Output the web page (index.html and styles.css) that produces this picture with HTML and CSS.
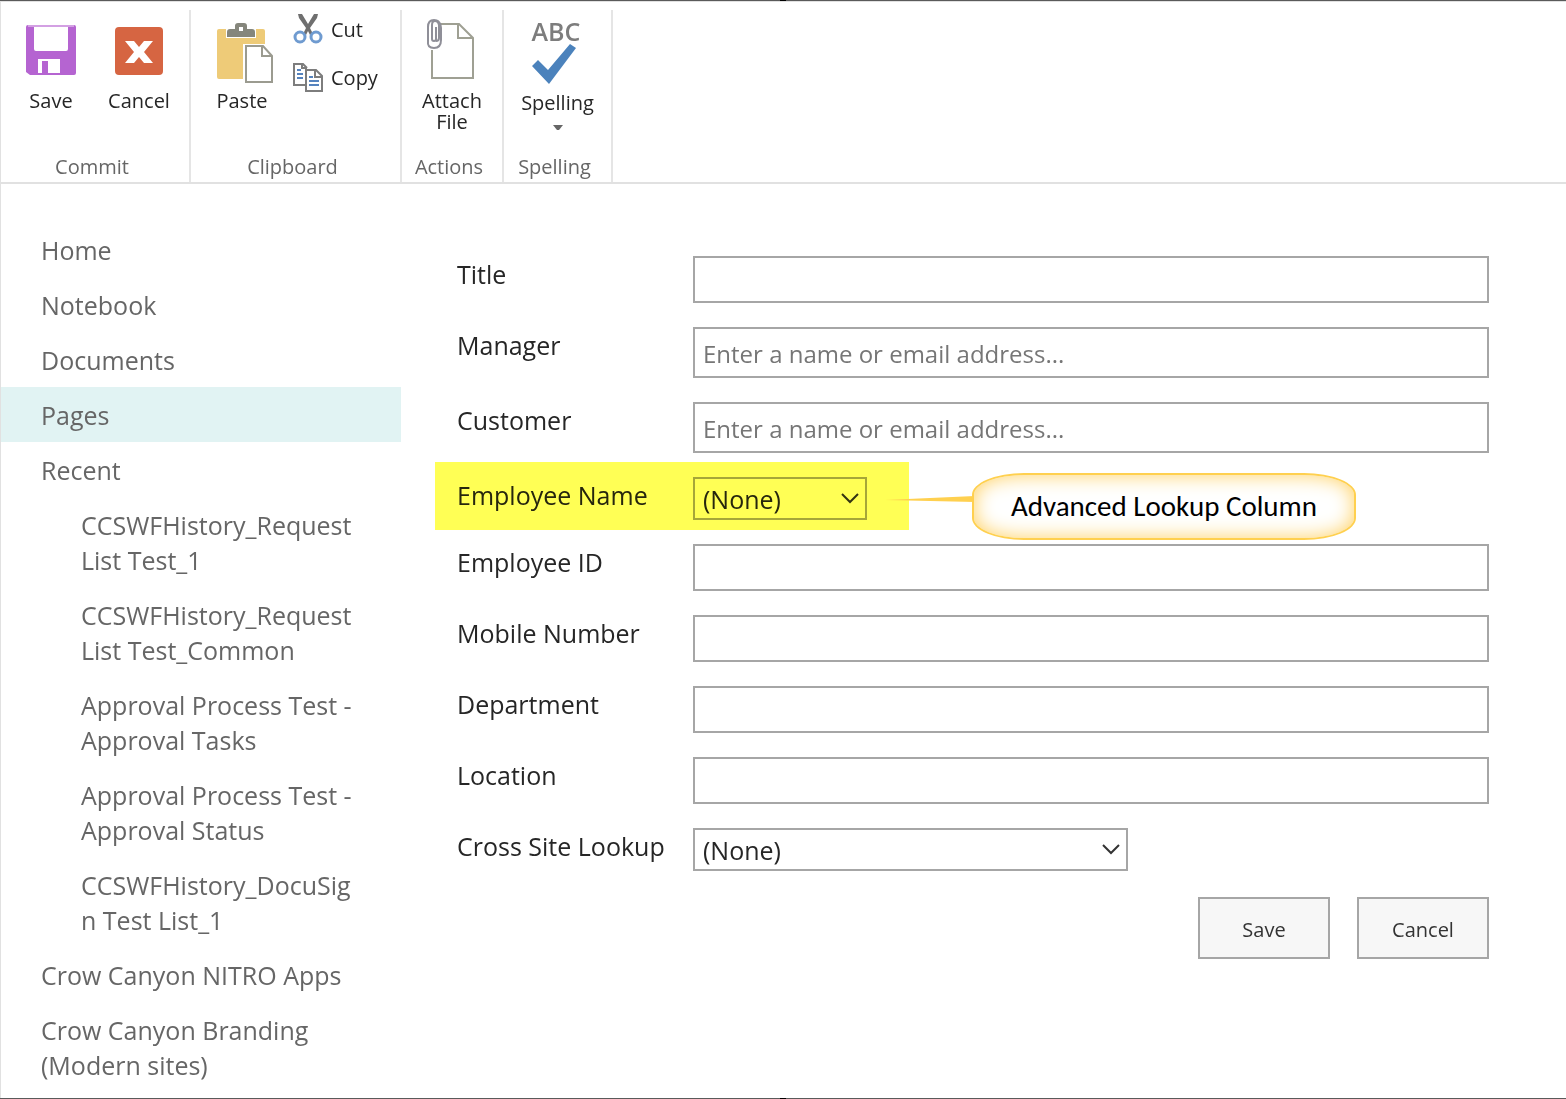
FILE: index.html
```html
<!DOCTYPE html>
<html lang="en">
<head>
<meta charset="utf-8">
<title>New Item</title>
<link rel="stylesheet" href="styles.css">
</head>
<body>
<div class="page">
  <header class="ribbon">
    <section class="group group-commit" aria-label="Commit">
      <div class="tools">
        <button type="button" class="tool">
          <svg class="tool-icon" width="52" height="52" viewBox="0 0 52 52">
            <path fill="#b564d1" fill-rule="evenodd" d="M1 3Q1 1 3 1H49Q51 1 51 3V49Q51 51 49 51H5L1 48ZM9 3V25Q9 27 11 27H41Q43 27 43 25V3ZM13 35V49H17V37H23V49H35V35Z"/>
            <path fill="#d3a0e3" d="M3 1H49V3H3Z"/>
          </svg>
          <span>Save</span>
        </button>
        <button type="button" class="tool">
          <svg class="tool-icon" width="52" height="52" viewBox="0 0 52 52">
            <rect x="2" y="3" width="48" height="48" rx="4" fill="#d66542"/>
            <path fill="#fff" d="M12 17H21L26 23L31 17H40L31 28L40 39H31L26 33L21 39H12L21 28Z"/>
          </svg>
          <span>Cancel</span>
        </button>
      </div>
      <h2 class="group-name">Commit</h2>
    </section>
    <section class="group group-clipboard" aria-label="Clipboard">
      <div class="tools">
        <button type="button" class="tool">
          <svg class="tool-icon icon-tall" width="58" height="62" viewBox="0 0 58 62">
            <path fill="#eecb78" d="M3 7H47Q49 7 49 9V22H27V57H3Q1 57 1 55V9Q1 7 3 7Z"/>
            <path fill="#fff" d="M10 6H40V16H10Z"/>
            <path fill="#85867c" fill-rule="evenodd" d="M11 15V10Q11 7 14 7H19V4Q19 1 22 1H28Q31 1 31 4V7H36Q39 7 39 10V15ZM23 5V9H27V5Z"/>
            <path fill="#fff" stroke="#9b9b90" stroke-width="2" d="M30 24H47L56 34V60H30ZM46 24V34H56"/>
          </svg>
          <span>Paste</span>
        </button>
        <div class="small-tools">
          <button type="button" class="small-tool">
            <svg width="30" height="32" viewBox="0 0 30 32">
              <path fill="#6f6f6f" d="M5 1L9 1L15 11L21 1L25 1L24 5L17 15L20 21L17 22L15 18L13 22L10 21L13 15L6 5Z"/>
              <circle cx="7" cy="24" r="5" fill="#fff" stroke="#6f9bd0" stroke-width="3"/>
              <circle cx="23" cy="24" r="5" fill="#fff" stroke="#6f9bd0" stroke-width="3"/>
            </svg>
            <span>Cut</span>
          </button>
          <button type="button" class="small-tool">
            <svg width="30" height="32" viewBox="0 0 30 32">
              <path fill="#fff" stroke="#7d7d7d" stroke-width="2" d="M12 24H1V3H10L14 7M9 3V7H14"/>
              <path stroke="#5583be" stroke-width="2" d="M4 9H8M4 13H10M4 17H10"/>
              <path fill="#fff" stroke="#7d7d7d" stroke-width="2" d="M13 9H23L29 15V30H13ZM22 9V16H29"/>
              <path stroke="#5583be" stroke-width="2" d="M16 16H20M16 20H26M16 24H26"/>
            </svg>
            <span>Copy</span>
          </button>
        </div>
      </div>
      <h2 class="group-name">Clipboard</h2>
    </section>
    <section class="group group-actions" aria-label="Actions">
      <div class="tools">
        <button type="button" class="tool">
          <svg class="tool-icon icon-tall" width="58" height="62" viewBox="0 0 58 62" fill="none">
            <path stroke="#9fa093" stroke-width="2" d="M17 6H36L50 20V60H9V32M35 6V20H50"/>
            <path stroke="#8f8f98" stroke-width="2" d="M13 9V21Q13 23 11 23T9 21V7Q9 3 12 3T16 7M16 4Q18 6 18 10V22Q18 30 11 30T5 23V9Q5 2 11 2T16 7V20Q16 23 13 23"/>
          </svg>
          <span>Attach<br>File</span>
        </button>
      </div>
      <h2 class="group-name">Actions</h2>
    </section>
    <section class="group group-spelling" aria-label="Spelling">
      <div class="tools">
        <button type="button" class="tool">
          <svg class="tool-icon icon-spell" width="54" height="76" viewBox="0 0 54 76">
            <text class="abc" x="27" y="31" text-anchor="middle">ABC</text>
            <path fill="#4b82bc" d="M3 56L9 50L19 60L41 34L47 38L20 74Z"/>
          </svg>
          <span>Spelling</span>
          <svg class="caret" width="10" height="6" viewBox="0 0 10 6"><path fill="#666" d="M0 0H10L6 5H4Z"/></svg>
        </button>
      </div>
      <h2 class="group-name">Spelling</h2>
    </section>
  </header>

  <div class="content">
    <nav class="side-nav" aria-label="Site">
      <ul>
        <li><a href="#">Home</a></li>
        <li><a href="#">Notebook</a></li>
        <li><a href="#">Documents</a></li>
        <li><a href="#" class="current" aria-current="page">Pages</a></li>
        <li><a href="#">Recent</a>
          <ul class="sub">
            <li><a href="#">CCSWFHistory_Request List Test_1</a></li>
            <li><a href="#">CCSWFHistory_Request List Test_Common</a></li>
            <li><a href="#">Approval Process Test - Approval Tasks</a></li>
            <li><a href="#">Approval Process Test - Approval Status</a></li>
            <li><a href="#">CCSWFHistory_DocuSign Test List_1</a></li>
          </ul>
        </li>
        <li><a href="#">Crow Canyon NITRO Apps</a></li>
        <li><a href="#">Crow Canyon Branding (Modern sites)</a></li>
      </ul>
    </nav>

    <main>
      <form class="item-form">
        <div class="row"><label for="title">Title</label><input class="field" id="title" type="text"></div>
        <div class="row"><label for="manager">Manager</label><input class="field people" id="manager" type="text" placeholder="Enter a name or email address..."></div>
        <div class="row"><label for="customer">Customer</label><input class="field people" id="customer" type="text" placeholder="Enter a name or email address..."></div>
        <div class="row marked">
          <label for="employee">Employee Name</label>
          <div class="pick pick-short">
            <select id="employee"><option>(None)</option></select>
            <svg class="chevron" width="18" height="12" viewBox="0 0 18 12"><path d="M1 2L9 10L17 2"/></svg>
          </div>
          <div class="callout">
            <svg class="tail" width="90" height="10" viewBox="0 0 90 10"><path d="M0 5L90 1V7Z"/></svg>
            <div class="bubble">Advanced Lookup Column</div>
          </div>
        </div>
        <div class="row"><label for="empid">Employee ID</label><input class="field" id="empid" type="text"></div>
        <div class="row"><label for="mobile">Mobile Number</label><input class="field" id="mobile" type="text"></div>
        <div class="row"><label for="dept">Department</label><input class="field" id="dept" type="text"></div>
        <div class="row"><label for="location">Location</label><input class="field" id="location" type="text"></div>
        <div class="row">
          <label for="cross">Cross Site Lookup</label>
          <div class="pick pick-long">
            <select id="cross"><option>(None)</option></select>
            <svg class="chevron" width="18" height="12" viewBox="0 0 18 12"><path d="M1 2L9 10L17 2"/></svg>
          </div>
        </div>
        <div class="buttons">
          <button type="submit">Save</button>
          <button type="button">Cancel</button>
        </div>
      </form>
    </main>
  </div>
</div>
</body>
</html>
```

FILE: styles.css
```css
* { box-sizing: border-box; }

body {
  margin: 0;
  background: #fff;
  color: #262626;
  font: 25px/35px "Segoe UI", "Open Sans", "Noto Sans", sans-serif;
}

button, input, select { font: inherit; color: inherit; }
ul { margin: 0; padding: 0; list-style: none; }
svg { display: block; }

.page {
  position: relative;
  min-height: 100vh;
  border: solid #5a5a5a;
  border-width: 1px 0;
  box-shadow: inset 1px 1px #e1e1e1;
}

.page::before, .page::after {
  content: "";
  position: absolute;
  left: 50%;
  width: 6px;
  height: 1px;
  margin-left: -3px;
  background: #000;
}
.page::before { top: -1px; }
.page::after { bottom: -1px; }

/* Ribbon */
.ribbon {
  display: flex;
  padding: 9px 0 0 1px;
  border-bottom: 2px solid #e1e1e1;
  font-size: 20px;
  line-height: 21px;
}
.group {
  display: flex;
  flex-direction: column;
  justify-content: space-between;
  height: 172px;
  border-right: 2px solid #e5e5e5;
}
.group-commit { width: 190px; }
.group-clipboard { width: 211px; }
.group-actions { width: 102px; }
.group-spelling { width: 109px; }

.tools { display: flex; }
.group-commit .tools { padding-left: 6px; }
.group-clipboard .tools { padding-left: 7px; gap: 7px; }
.group-actions .tools, .group-spelling .tools { justify-content: center; }

.tool {
  display: flex;
  flex-direction: column;
  align-items: center;
  width: 88px;
  padding: 14px 0 0;
  border: 0;
  background: none;
}
.tool-icon { margin-bottom: 14px; }
.icon-tall { margin: -2px 0 6px 6px; }
.icon-spell { margin: -14px 4px 6px 0; }
.group-actions .icon-tall { margin: -6px 0 10px; }
.abc { font-family: "Open Sans", sans-serif; font-size: 25px; font-weight: 600; fill: #7d7d7d; }
.caret { margin-top: 12px; }

.small-tools { display: flex; flex-direction: column; gap: 16px; padding-top: 3px; }
.small-tool {
  display: flex;
  align-items: center;
  gap: 8px;
  padding: 0;
  border: 0;
  background: none;
}

.group-name {
  margin: 0;
  padding: 0 6px 5px 0;
  font-size: 20px;
  font-weight: 400;
  text-align: center;
  color: #666;
}

/* Body */
.content { display: flex; }

.side-nav { flex: 0 0 401px; padding: 38px 0 0 1px; }
.side-nav a {
  display: block;
  padding: 11px 42px 9px 40px;
  color: #666;
  text-decoration: none;
  overflow-wrap: anywhere;
}
.side-nav .sub a { padding-left: 80px; }
.side-nav .current { background: #e1f3f3; }

main { flex: 1; min-width: 0; padding: 72px 77px 0 56px; }

.item-form { display: flex; flex-direction: column; gap: 24px; }
.row { display: flex; align-items: flex-start; position: relative; }
.row label { flex: 0 0 236px; padding-top: 1px; }

.field {
  flex: 1;
  min-width: 0;
  height: 47px;
  padding: 0 8px;
  border: 2px solid #a6a6a6;
  background: #fff;
}
.people { height: 51px; padding-top: 1px; font-size: 24px; }
.field::placeholder { color: #767676; opacity: 1; }

.pick { position: relative; }
.pick select {
  appearance: none;
  display: block;
  width: 100%;
  height: 43px;
  padding: 2px 8px 0;
  border: 2px solid #a6a6a6;
  border-radius: 0;
  background: #fff;
}
.pick-short { width: 174px; }
.pick-long { width: 435px; }
.chevron {
  position: absolute;
  right: 8px;
  top: 15px;
  fill: none;
  stroke: #333;
  stroke-width: 2;
  pointer-events: none;
}

/* Highlighter mark over the lookup row, with its note */
.marked::after {
  content: "";
  position: absolute;
  left: -22px;
  top: -15px;
  width: 474px;
  height: 68px;
  background: #ffff55;
  mix-blend-mode: multiply;
  pointer-events: none;
}
.callout {
  position: absolute;
  left: 428px;
  top: -4px;
  z-index: 1;
  display: flex;
  align-items: flex-start;
}
.tail { margin: 22px -3px 0 0; fill: #ffd04f; }
.bubble {
  width: 384px;
  height: 67px;
  border: 2px solid #ffd04f;
  border-radius: 52px / 22px;
  background: #fff;
  box-shadow: inset 0 0 20px #ffd060;
  color: #000;
  font: 29px/63px Calibri, Carlito, Lato, sans-serif;
  text-align: center;
  white-space: nowrap;
}

.buttons { display: flex; justify-content: flex-end; gap: 27px; padding-top: 2px; }
.buttons button {
  width: 132px;
  height: 62px;
  padding: 2px 0 0;
  border: 2px solid #a6a6a6;
  background: #f7f7f7;
  color: #333;
  font-size: 20px;
}
```
